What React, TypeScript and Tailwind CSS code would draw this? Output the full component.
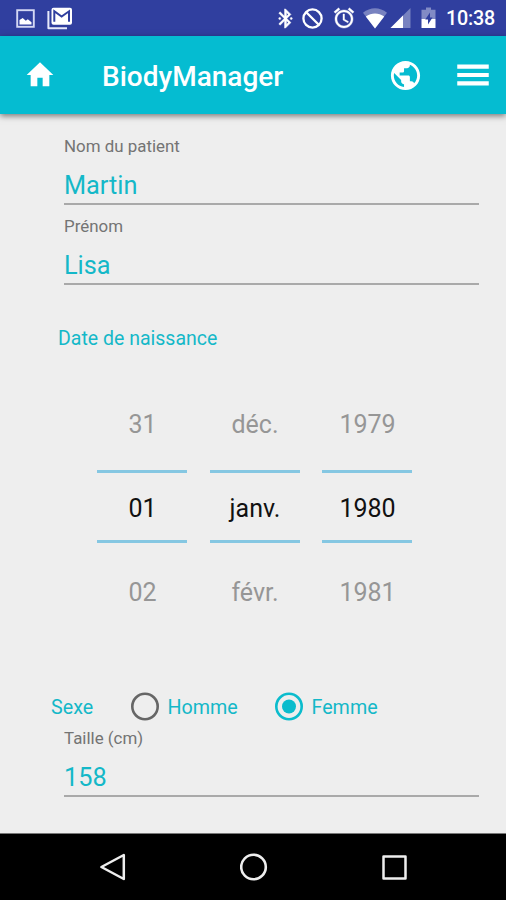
import React, { useState } from 'react';

interface FieldProps {
  label: string;
  value: string;
  onChange: (v: string) => void;
}

const Field: React.FC<FieldProps> = ({ label, value, onChange }) => (
  <label className="block ml-16 mr-[27px]">
    <span className="block text-[16.9px] leading-[18px] text-[#747474]">{label}</span>
    <input
      value={value}
      onChange={(e) => onChange(e.target.value)}
      className="block w-full h-[35px] mt-[15px] pb-[3px] border-b-2 border-[#a9a9a9] bg-transparent outline-none text-[25.3px] leading-[30px] text-[#14b8c8]"
    />
  </label>
);

const PICKERS = [
  { prev: '31', current: '01', next: '02' },
  { prev: 'déc.', current: 'janv.', next: 'févr.' },
  { prev: '1979', current: '1980', next: '1981' },
];

interface RadioProps {
  label: string;
  checked: boolean;
  onSelect: () => void;
}

const Radio: React.FC<RadioProps> = ({ label, checked, onSelect }) => (
  <button onClick={onSelect} className="flex items-center">
    <svg className={`w-[29px] h-7 overflow-visible ${checked ? 'text-[#0bbccd]' : 'text-[#666666]'}`} viewBox="0 0 29 28">
      <circle cx="14" cy="13.5" r="12.7" fill="none" stroke="currentColor" strokeWidth="2.6" />
      {checked && <circle cx="14" cy="13.5" r="7" fill="currentColor" />}
    </svg>
    <span className="ml-2 pt-0.5">{label}</span>
  </button>
);

const StatusBar: React.FC = () => (
  <div className="flex items-center h-9 pl-4 pr-[11px] bg-[#303f9f] text-white">
    {/* Notifications */}
    <svg className="w-[19px] h-[19px]" viewBox="0 0 19 19">
      <rect x="1.2" y="1.2" width="16.6" height="16.6" fill="none" stroke="#d3d8f4" strokeWidth="1.9" />
      <path d="M3.5 15.5V11l3.2-2 3.1 2.7 2-1.5 3.7 3v2.3z" fill="#fff" />
    </svg>
    <svg className="w-[26px] h-[23px] ml-3" viewBox="0 0 26 23">
      <path d="M1.4 4v17.2H20" fill="none" stroke="#e6e9fb" strokeWidth="2" strokeLinejoin="round" />
      <rect x="4.5" y="0.8" width="20.5" height="17" rx="2" fill="#fff" />
      <path d="M7.3 14.8V4.3l7.3 5.2L22 4.3v10.5" fill="none" stroke="#303f9f" strokeWidth="2" />
    </svg>
    {/* System icons */}
    <div className="flex items-center ml-auto">
      <svg className="w-[23px] h-[23px]" viewBox="0 0 24 24" fill="currentColor" stroke="currentColor" strokeWidth="0.5">
        <path d="M17.71 7.71 12 2h-1v7.59L6.41 5 5 6.41 10.59 12 5 17.59 6.41 19 11 14.41V22h1l5.71-5.71-4.3-4.29 4.3-4.29zM13 5.83l1.88 1.88L13 9.59V5.83zm1.88 10.46L13 18.17v-3.76l1.88 1.88z" />
        <circle cx="6" cy="12" r="1.1" />
        <circle cx="18" cy="12" r="1.1" />
      </svg>
      <svg className="w-[21px] h-[21px] ml-[5px]" viewBox="0 0 21 21" fill="none" stroke="currentColor" strokeWidth="2.3">
        <circle cx="10.5" cy="10.5" r="9.1" />
        <path d="M4 4l13 13" />
      </svg>
      <svg className="w-6 h-6 ml-[9px]" viewBox="0 0 24 24" fill="currentColor" stroke="currentColor" strokeWidth="0.4">
        <path d="M22 5.72l-4.6-3.86-1.29 1.53 4.6 3.86L22 5.72zM7.88 3.39L6.6 1.86 2 5.71l1.29 1.53 4.59-3.85zM12.5 8H11v6l4.75 2.85.75-1.23-4-2.37V8zM12 4c-4.97 0-9 4.03-9 9s4.02 9 9 9c4.97 0 9-4.03 9-9s-4.03-9-9-9zm0 16c-3.87 0-7-3.13-7-7s3.13-7 7-7 7 3.13 7 7-3.13 7-7 7z" />
      </svg>
      <svg className="w-6 h-[21px] ml-[7px]" viewBox="0 0 24 21" fill="currentColor">
        <path opacity="0.35" d="M0 4.8C7-1.2 17-1.2 24 4.8L12 20.5z" />
        <path d="M2.8 8.5c5.6-4 12.8-4 18.4 0L12 20.5z" />
      </svg>
      <svg className="w-[21px] h-[21px] ml-[3px]" viewBox="0 0 21 21" fill="currentColor">
        <path opacity="0.35" d="M20.5 0v20H.5z" />
        <path d="M13 7.5V20H.5z" />
      </svg>
      <svg className="w-[15px] h-[22px] ml-[10px]" viewBox="0 0 15 22" fill="currentColor">
        <path opacity="0.4" d="M5 0.5h5v2.2h4.5V12H.5V2.7H5z" />
        <path d="M.5 12h14v9H.5z" />
        <path d="M9 5.5 4.2 12.5h2.8V17.5l4.5-7H9z" fill="#303f9f" />
      </svg>
      <span className="ml-[10px] mt-0.5 text-[19.7px] font-medium leading-6 tracking-[-0.2px]">10:38</span>
    </div>
  </div>
);

const App: React.FC = () => {
  const [lastName, setLastName] = useState('Martin');
  const [firstName, setFirstName] = useState('Lisa');
  const [height, setHeight] = useState('158');
  const [sex, setSex] = useState<'H' | 'F'>('F');

  return (
    <div className="flex flex-col w-full h-[900px] overflow-hidden bg-[#eeeeee] font-['Roboto',sans-serif]">
      <StatusBar />

      <header className="flex items-center h-[78px] shrink-0 pl-6 pr-3 bg-[#05bcd1] text-white shadow-[0_2px_6px_rgba(0,0,0,0.5)]">
        <svg className="w-8 h-[34px]" viewBox="0 0 24 24" preserveAspectRatio="none" fill="currentColor">
          <path d="M10 20v-6h4v6h5v-8h3L12 3 2 12h3v8z" />
        </svg>
        <h1 className="ml-[46px] pt-1 text-[28px] font-medium leading-8">BiodyManager</h1>
        <svg className="w-[35px] h-[35px] ml-auto" viewBox="0 0 24 24" fill="currentColor">
          <path d="M12 2C6.48 2 2 6.48 2 12s4.48 10 10 10 10-4.48 10-10S17.52 2 12 2zm-1 17.93c-3.95-.49-7-3.85-7-7.93 0-.62.08-1.21.21-1.79L9 15v1c0 1.1.9 2 2 2v1.93zm6.9-2.54c-.26-.81-1-1.39-1.9-1.39h-1v-3c0-.55-.45-1-1-1H8v-2h2c.55 0 1-.45 1-1V7h2c1.1 0 2-.9 2-2v-.41c2.93 1.19 5 4.06 5 7.41 0 2.08-.8 3.97-2.1 5.39z" />
        </svg>
        <svg className="w-[42px] h-[42px] ml-[29px]" viewBox="0 0 24 24" fill="currentColor">
          <path d="M3 18h18v-2.4H3V18zm0-4.8h18v-2.4H3v2.4zM3 6v2.4h18V6H3z" />
        </svg>
      </header>

      <main className="flex-1 pt-[23px]">
        <Field label="Nom du patient" value={lastName} onChange={setLastName} />
        <div className="h-3" />
        <Field label="Prénom" value={firstName} onChange={setFirstName} />

        <h2 className="ml-[58px] mt-[42px] text-[19.5px] leading-6 text-[#14b8c8]">Date de naissance</h2>

        <div className="flex gap-[22.5px] ml-[97px] mt-[59px] text-[25px] leading-[30px] text-center text-[#969696]">
          {PICKERS.map((p) => (
            <div key={p.current} className="w-[90px]">
              <div className="pl-px">{p.prev}</div>
              <div className="mt-[30px] pl-px pt-[21px] pb-4 border-y-3 border-[#85c7e2] text-[#111111]">{p.current}</div>
              <div className="mt-[35px] pl-px">{p.next}</div>
            </div>
          ))}
        </div>

        <div className="flex items-center ml-[51px] mt-[85px] text-[19.7px] leading-6 text-[#14b8c8]">
          <span className="w-[79.5px] pt-0.5">Sexe</span>
          <div className="w-36">
            <Radio label="Homme" checked={sex === 'H'} onSelect={() => setSex('H')} />
          </div>
          <Radio label="Femme" checked={sex === 'F'} onSelect={() => setSex('F')} />
        </div>

        <div className="mt-2">
          <Field label="Taille (cm)" value={height} onChange={setHeight} />
        </div>
      </main>

      <nav className="flex items-center justify-between h-[67px] shrink-0 px-[99px] bg-black border-t border-[#777777]">
        <svg className="w-[27px] h-[28px]" viewBox="0 0 27 28" fill="none" stroke="#eeeeee" strokeWidth="2.5" strokeLinejoin="round">
          <path d="M2.4 14 24.8 2v24z" />
        </svg>
        <svg className="w-7 h-7" viewBox="0 0 28 28" fill="none" stroke="#eeeeee" strokeWidth="2.6">
          <circle cx="13.5" cy="14" r="12.3" />
        </svg>
        <svg className="w-[25px] h-[25px]" viewBox="0 0 25 25" fill="none" stroke="#eeeeee" strokeWidth="2.5" strokeLinejoin="round">
          <rect x="1.5" y="1.5" width="22" height="22" />
        </svg>
      </nav>
    </div>
  );
};

export default App;
